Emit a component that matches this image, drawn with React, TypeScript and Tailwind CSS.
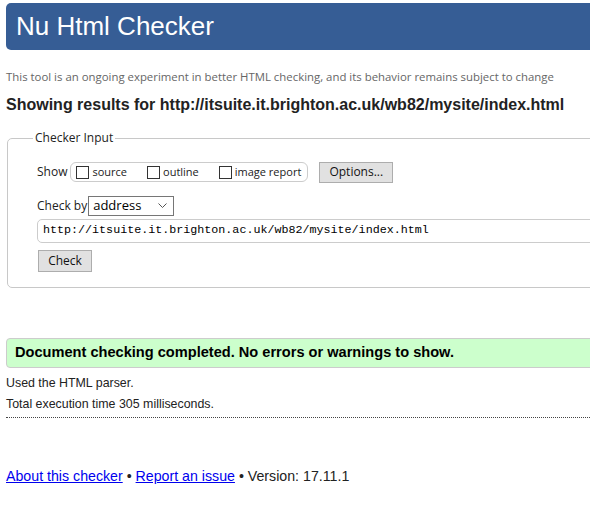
import React from "react";

function Box() {
  return <span className="inline-block w-[13px] h-[13px] border border-[#333] bg-white mr-[3px] align-middle" />;
}

export default function App() {
  return (
    <div className="w-[590px] h-[505px] overflow-hidden bg-white text-[#222]" style={{ fontFamily: "Arial, 'Liberation Sans', sans-serif" }}>
      <div className="w-[720px] pl-[6px] pt-[3px]">
        <div className="h-[47px] rounded-[5px] bg-[#365d95] pl-[10px] text-white text-[26px] leading-[47px]">Nu Html Checker</div>
        <div className="mt-[19px] h-[16px] leading-[16px] text-[11.4px] text-[#666]" style={{ fontFamily: "'Open Sans', sans-serif" }}>
          This tool is an ongoing experiment in better HTML checking, and its behavior remains subject to change
        </div>
        <div className="mt-[10px] h-[20px] leading-[20px] text-[16px] font-bold">Showing results for http://itsuite.it.brighton.ac.uk/wb82/mysite/index.html</div>
        <fieldset className="mt-[15px] ml-[1px] h-[158px] border border-[#c8c8c8] rounded-[5px]" style={{ fontFamily: "'Open Sans', sans-serif" }}>
          <legend className="ml-[25px] px-[2px] text-[12px] leading-[16px] text-[#222]">Checker Input</legend>
          <div className="pl-[29px]">
            <div className="mt-[15px] flex items-center h-[22px] text-[12px]">
              <span className="mr-[3px]">Show</span>
              <div className="flex items-center h-[20px] border border-[#ccc] rounded-[6px] pl-[5px] pr-[6px] text-[11px]">
                <label className="flex items-center mr-[20px]"><Box />source</label>
                <label className="flex items-center mr-[20px]"><Box />outline</label>
                <label className="flex items-center"><Box />image report</label>
              </div>
              <button className="ml-[11px] h-[21px] w-[74px] border border-[#adadad] bg-[#e1e1e1] text-[12px] text-[#111]">Options...</button>
            </div>
            <div className="mt-[12px] flex items-center h-[21px] text-[12px]">
              <span className="mr-[1px]">Check by</span>
              <div className="flex items-center justify-between w-[86px] h-[20px] border border-[#767676] pl-[4px] pr-[6px] text-[13px] text-black">
                <span>address</span>
                <svg width="9" height="6" viewBox="0 0 9 6"><path d="M0.5 0.5 L4.5 4.5 L8.5 0.5" fill="none" stroke="#555" strokeWidth="1" /></svg>
              </div>
            </div>
            <div className="mt-[3px] h-[24px] flex items-center border border-[#ccc] rounded-l-[5px] pl-[5px] text-[11.7px] text-black" style={{ fontFamily: "'Liberation Mono', monospace" }}>
              http://itsuite.it.brighton.ac.uk/wb82/mysite/index.html
            </div>
            <button className="mt-[7px] ml-[1px] h-[22px] w-[54px] border border-[#adadad] bg-[#e1e1e1] text-[12px] text-[#111] block">Check</button>
          </div>
        </fieldset>
        <div className="mt-[50px] h-[30px] flex items-center border border-[#ccc] rounded-l-[4px] bg-[#ccffcc] pl-[8px] text-[14.6px] font-bold text-black">
          Document checking completed. No errors or warnings to show.
        </div>
        <div className="mt-[7px] text-[12.4px] leading-[16px] text-[#222]">Used the HTML parser.</div>
        <div className="mt-[5px] text-[12.4px] leading-[16px] text-[#222]">Total execution time 305 milliseconds.</div>
        <div className="mt-[5px] w-[584px] border-t border-dotted border-[#444]" />
        <div className="mt-[49px] text-[14.2px] leading-[18px] text-[#222]">
          <a className="text-[#0000ee] underline">About this checker</a> • <a className="text-[#0000ee] underline">Report an issue</a> • Version: 17.11.1
        </div>
      </div>
    </div>
  );
}
